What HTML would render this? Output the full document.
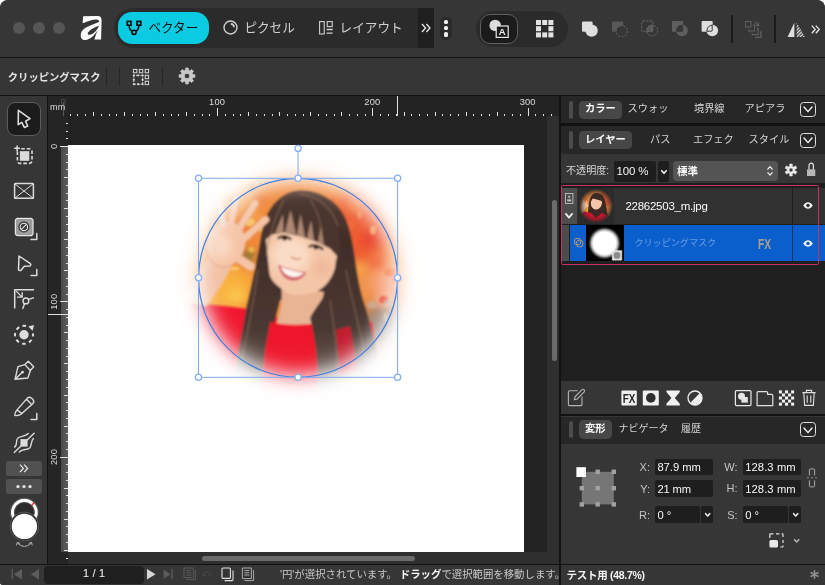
<!DOCTYPE html>
<html lang="ja">
<head>
<meta charset="utf-8">
<title>Affinity</title>
<style>
*{box-sizing:border-box;margin:0;padding:0}
html,body{width:825px;height:585px;overflow:hidden;background:#fff}
body{font-family:"Liberation Sans","Noto Sans CJK JP",sans-serif;font-size:11px;color:#e6e6e6;position:relative}
.abs,#win *{position:absolute}
#win{will-change:transform;position:absolute;left:0;top:0;width:825px;height:585px;background:#363636;border-radius:8px 8px 0 3px;overflow:hidden}
.t{white-space:nowrap;line-height:1}
svg{overflow:visible}
/* title bar */
#title{left:0;top:0;width:825px;height:57px;background:#363636}
#ctx{left:0;top:58px;width:825px;height:37px;background:#363636}
.hl{background:#121212;height:1px}
.vl{background:#121212;width:1px}
.tl{width:12px;height:12px;border-radius:50%;background:#565656;top:22px}
#pill{left:114px;top:8px;width:304px;height:40px;border-radius:20px 0 0 20px;background:#2b2b2b}
#vec{left:118px;top:12px;width:91px;height:32px;border-radius:14px;background:#0bcbe2}
/* tools */
#tools{left:0;top:96px;width:47px;height:468px;background:#363636}
#canvas{left:48px;top:96px;width:511px;height:468px;background:#232323;overflow:hidden}
#status{left:0;top:565px;width:825px;height:20px;background:#363636}
#right{left:561px;top:96px;width:264px;height:468px;background:#363636}
.tb{font-size:10.3px;font-weight:700;color:#fafafa}
.tn{font-size:10.2px;color:#d4d4d4}
.fv{font-size:11.2px;color:#f6f6f6}
.fl{font-size:11px;color:#c4c4c4}
</style>
</head>
<body>
<div id="win">
<!-- TITLE BAR -->
<div id="title">
  <div class="tl" style="left:13px"></div><div class="tl" style="left:33px"></div><div class="tl" style="left:53px"></div>
  <svg id="logo" style="left:80px;top:16px" width="22" height="24" viewBox="0 0 22 24"><path fill="#fff" d="M3.1 0.2 L17.5 0 C20.5 0 21.6 1.5 21.6 4.4 L21.1 23.5 L14.3 23.5 L17.4 14.6 C14.5 19.5 9.5 24 5.5 24 C1.6 24 0.2 21.5 0.9 17.4 C1.8 14 5 11.5 9.4 9.9 C13 8.4 16.5 6.8 19.1 5.7 C19.6 4.6 18.6 3.6 16.2 3.4 C13 3.4 9.4 4.5 2.6 7.3 Z"/><path fill="#363636" d="M19.1 9.9 C15.5 10.4 10.5 13.2 8.2 16.2 C7 18 8 19.4 10.9 18.6 C14 17.6 17 14 19.1 9.9 Z"/></svg>
  <div id="pill"></div>
  <div id="more1" style="left:418px;top:8px;width:16px;height:40px;background:#1f1f1f"></div>
  <div id="vec"></div>
  <svg style="left:126px;top:20px" width="16" height="16" viewBox="0 0 16 16" fill="none" stroke="#0a0a0a" stroke-width="1.6"><rect x="1.2" y="1.4" width="3.8" height="3.8"/><rect x="11" y="1.4" width="3.8" height="3.8"/><circle cx="8" cy="12.3" r="2.1"/><path d="M3.1 5.2 C3.3 8.5 4.6 10.6 6.3 11.3 M12.9 5.2 C12.7 8.5 11.4 10.6 9.7 11.3"/></svg>
  <div class="t" style="left:148.4px;top:21.6px;font-size:12.6px;color:#111">ベクター</div>
  <svg style="left:222.5px;top:20.3px" width="15" height="15" viewBox="0 0 15 15" fill="none" stroke="#d2d2d2" stroke-width="1.4"><circle cx="7.5" cy="7.5" r="6.5"/><path d="M7.8 3.9 A3.6 3.6 0 0 1 11.1 7.2" stroke-width="1.6"/></svg>
  <div class="t" style="left:244.4px;top:21.6px;font-size:12.6px;color:#d2d2d2">ピクセル</div>
  <svg style="left:319px;top:21px" width="14" height="14" viewBox="0 0 14 14" fill="none" stroke="#d2d2d2" stroke-width="1.1"><rect x="0.6" y="0.6" width="4.6" height="12.4"/><rect x="8.2" y="0.6" width="5" height="5"/><path d="M7.6 8.5H13.7M7.6 12.1H13.7" stroke-width="1.3"/></svg>
  <div class="t" style="left:339.6px;top:21.6px;font-size:12.6px;color:#d2d2d2">レイアウト</div>
  <svg style="left:421px;top:23px" width="10" height="10" viewBox="0 0 10 10" fill="none" stroke="#e8e8e8" stroke-width="1.3"><path d="M1 1L4.6 5L1 9M5.4 1L9 5L5.4 9"/></svg>
  <div style="left:440px;top:17px;width:12px;height:23px;border-radius:5px;background:#2a2a2a"></div>
  <div style="left:443.8px;top:19.7px;width:4.6px;height:4.6px;border-radius:1.6px;background:#eee"></div>
  <div style="left:443.8px;top:25.9px;width:4.6px;height:4.6px;border-radius:1.6px;background:#eee"></div>
  <div style="left:443.8px;top:32px;width:4.6px;height:4.6px;border-radius:1.6px;background:#eee"></div>
  <div id="grp2" style="left:476px;top:10.5px;width:92px;height:36.5px;border-radius:18px;background:#2b2b2b"></div>
  <div id="selbtn" style="left:480px;top:14px;width:38px;height:29.5px;border-radius:10px;background:#1b1b1b;border:1px solid #5e5e5e"></div>
  <svg style="left:488px;top:18px" width="22" height="21" viewBox="0 0 22 21"><circle cx="7.2" cy="7.4" r="5.7" fill="#dcdcdc"/><rect x="8.2" y="8" width="12" height="11.4" fill="#1b1b1b" stroke="#e6e6e6" stroke-width="1.2"/><text x="14.2" y="17.4" font-family="Liberation Sans,sans-serif" font-weight="700" font-size="9.5" fill="#f0f0f0" text-anchor="middle" style="position:static">A</text></svg>
  <svg style="left:536px;top:20px" width="18" height="18" viewBox="0 0 18 18" fill="#e2e2e2"><rect x="0" y="0" width="5" height="5"/><rect x="6.2" y="0" width="5" height="5"/><rect x="12.4" y="0" width="5" height="5"/><rect x="0" y="6.2" width="5" height="5"/><rect x="12.4" y="6.2" width="5" height="5"/><rect x="0" y="12.4" width="5" height="5"/><rect x="6.2" y="12.4" width="5" height="5"/><rect x="12.4" y="12.4" width="5" height="5"/></svg>
  <svg style="left:580px;top:19px" width="20" height="20" viewBox="0 0 20 20"><rect x="2" y="2.5" width="10.6" height="10.3" rx="1.2" fill="#dedede"/><circle cx="11.6" cy="11.6" r="6.2" fill="#dedede"/></svg>
  <svg style="left:610px;top:19px" width="20" height="20" viewBox="0 0 20 20"><rect x="2" y="2.5" width="11.2" height="10.3" rx="1" fill="#585858"/><circle cx="11.7" cy="12.2" r="5.6" fill="#363636" stroke="#6c6c6c" stroke-width="1" stroke-dasharray="2 1.4"/></svg>
  <svg style="left:640px;top:19px" width="20" height="20" viewBox="0 0 20 20"><path d="M6.63 12.7 A5.5 5.5 0 0 1 13 6.09 V12.7 Z" fill="#5a5a5a"/><rect x="1.8" y="2" width="11.2" height="10.7" rx="1" fill="none" stroke="#6c6c6c" stroke-width="1" stroke-dasharray="2 1.4"/><circle cx="12" cy="11.5" r="5.5" fill="none" stroke="#6c6c6c" stroke-width="1" stroke-dasharray="2 1.4"/></svg>
  <svg style="left:670px;top:19px" width="20" height="20" viewBox="0 0 20 20"><path fill-rule="evenodd" fill="#5e5e5e" d="M3 2 H12.2 A1 1 0 0 1 13.2 3 V11.7 A1 1 0 0 1 12.2 12.7 H3 A1 1 0 0 1 2 11.7 V3 A1 1 0 0 1 3 2 Z M12 5.7 A5.8 5.8 0 1 1 11.99 5.7 Z"/></svg>
  <svg style="left:700px;top:19px" width="20" height="20" viewBox="0 0 20 20"><defs><clipPath id="cq"><rect x="1.6" y="2" width="11.1" height="10.7" rx="1"/></clipPath><clipPath id="cc"><circle cx="12.3" cy="11.5" r="5.8"/></clipPath></defs><rect x="1.6" y="2" width="11.1" height="10.7" rx="1" fill="#dedede"/><circle cx="12.3" cy="11.5" r="5.8" fill="#dedede"/><circle cx="12.3" cy="11.5" r="5.3" fill="none" stroke="#363636" stroke-width="1" clip-path="url(#cq)"/><rect x="2.1" y="2.5" width="10.1" height="9.7" rx="0.6" fill="none" stroke="#363636" stroke-width="1" clip-path="url(#cc)"/></svg>
  <div style="left:731px;top:15px;width:1.5px;height:28px;background:#1a1a1a"></div>
  <svg style="left:745px;top:21px" width="17" height="17" viewBox="0 0 17 17" fill="none" stroke="#606060" stroke-width="1.1"><rect x="0.6" y="0.6" width="5.4" height="5.4"/><path d="M3.6 8.4 V10 H9.6 V4 H8"/><path d="M7.2 12.2 V13.6 H13.2 V7.6 H11.8" /><path d="M10.8 15.8 V16.4 H16 V11 H15.4" stroke-width="1.4"/><path d="M10 1 L13.4 4.4 M13.6 1.6 V4.6 H10.6"/></svg>
  <div style="left:774px;top:15px;width:1.5px;height:28px;background:#1a1a1a"></div>
  <svg style="left:787px;top:22px" width="19" height="16" viewBox="0 0 19 16"><defs><pattern id="hatch" width="2.4" height="2.4" patternUnits="userSpaceOnUse" patternTransform="rotate(-45)"><rect width="2.4" height="1.3" fill="#dcdcdc"/></pattern></defs><path d="M7.4 0.6 V15 H0.6 Z" fill="#dedede"/><path d="M9.6 0.6 V15 H18 Z" fill="url(#hatch)"/></svg>
  <svg style="left:811px;top:25px" width="9" height="9" viewBox="0 0 9 9" fill="none" stroke="#eaeaea" stroke-width="1.3"><path d="M0.8 0.6L4.2 4.4L0.8 8.2M4.8 0.6L8.2 4.4L4.8 8.2"/></svg>
</div>
<div class="hl" style="left:0;top:57px;width:825px"></div>
<!-- CONTEXT TOOLBAR -->
<div id="ctx">
  <div class="t" style="left:7.8px;top:14.8px;font-size:10.3px;font-weight:700;color:#e4e4e4">クリッピングマスク</div>
  <div class="vl" style="left:106px;top:9px;height:19px;background:#262626"></div>
  <div class="vl" style="left:119px;top:9px;height:19px;background:#262626"></div>
  <div class="vl" style="left:162px;top:9px;height:19px;background:#262626"></div>
  <svg style="left:132px;top:10px" width="18" height="18" viewBox="0 0 18 18" fill="none" stroke="#d8d8d8" stroke-width="1"><rect x="1.4" y="1.4" width="3.4" height="3.4"/><rect x="7.3" y="1.4" width="3.4" height="3.4"/><rect x="13.2" y="1.4" width="3.4" height="3.4"/><rect x="13.2" y="7.3" width="3.4" height="3.4"/><rect x="13.2" y="13.2" width="3.4" height="3.4"/><rect x="1.8" y="7.4" width="8.8" height="8.8" stroke-dasharray="1.2 1"/><g fill="#e4e4e4" stroke="none"><rect x="0.9" y="6.5" width="1.8" height="1.8"/><rect x="5.3" y="6.5" width="1.8" height="1.8"/><rect x="9.7" y="6.5" width="1.8" height="1.8"/><rect x="0.9" y="10.9" width="1.8" height="1.8"/><rect x="9.7" y="10.9" width="1.8" height="1.8"/><rect x="0.9" y="15.3" width="1.8" height="1.8"/><rect x="5.3" y="15.3" width="1.8" height="1.8"/><rect x="9.7" y="15.3" width="1.8" height="1.8"/></g></svg>
  <svg style="left:178px;top:9px" width="18" height="18" viewBox="0 0 18 18"><path fill-rule="evenodd" fill="#c8c8c8" stroke="#c8c8c8" stroke-width="0.8" stroke-linejoin="round" d="M7.58 3.27 L7.69 1.11 L10.31 1.11 L10.42 3.27 L12.04 3.95 L13.65 2.49 L15.51 4.35 L14.05 5.96 L14.73 7.58 L16.89 7.69 L16.89 10.31 L14.73 10.42 L14.05 12.04 L15.51 13.65 L13.65 15.51 L12.04 14.05 L10.42 14.73 L10.31 16.89 L7.69 16.89 L7.58 14.73 L5.96 14.05 L4.35 15.51 L2.49 13.65 L3.95 12.04 L3.27 10.42 L1.11 10.31 L1.11 7.69 L3.27 7.58 L3.95 5.96 L2.49 4.35 L4.35 2.49 L5.96 3.95 Z M11.70 9.00 A2.70 2.70 0 1 0 6.30 9.00 A2.70 2.70 0 1 0 11.70 9.00 Z"/></svg>
</div>
<div class="hl" style="left:0;top:95px;width:825px"></div>
<!-- TOOLS -->
<div id="tools">
  <div style="left:7px;top:6px;width:34px;height:34px;border-radius:8px;background:#1c1c1c;border:1px solid #5c5c5c"></div>
  <svg style="left:0;top:0" width="47" height="468" viewBox="0 0 47 468" fill="none" stroke="#dcdcdc" stroke-width="1.5" stroke-linejoin="round" stroke-linecap="round">
    <!-- move -->
    <path d="M18.4 14.3 L18.2 28.7 L21.8 26.4 L24.3 31.4 L27.7 30 L25.6 25.2 L30 22.6 Z" stroke-width="1.6"/>
    <!-- artboard -->
    <rect x="17.4" y="52.8" width="14.6" height="14.6" rx="2.6" stroke-width="1.6" stroke-dasharray="3.6 2" stroke-dashoffset="-1.2" stroke-linecap="butt"/>
    <rect x="16" y="50" width="5" height="5" fill="#363636" stroke="none"/>
    <path d="M14.2 52.3 H20 M17.1 49.4 V55.2" stroke-width="1.5" stroke-linecap="butt"/>
    <rect x="19.9" y="55.2" width="9.4" height="9.6" fill="#dcdcdc" stroke="none"/>
    <!-- frame -->
    <rect x="14.6" y="87.5" width="18.8" height="14.8" rx="0.8" stroke-width="1.5"/>
    <path d="M15 88 L33 102 M33 88 L15 102" stroke-width="1"/>
    <!-- fill -->
    <rect x="15.4" y="122.4" width="17.6" height="17.2" rx="2.4" fill="#9c9c9c" stroke="#e8e8e8" stroke-width="1.3" stroke-dasharray="1 0.9"/>
    <circle cx="23.9" cy="130.9" r="5.6" fill="#3a3a3a" stroke="none"/>
    <circle cx="23.9" cy="130.9" r="3.7" stroke="#e6e6e6" stroke-width="1.1"/>
    <path d="M21.4 133.4 L26.4 128.4" stroke="#e6e6e6" stroke-width="1.1"/>
    <path d="M36.8 137.6 V143.5 H31" fill="none" stroke="#d8d8d8" stroke-width="1.5"/>
    <!-- node -->
    <path d="M19 160 L18.5 173.6 Q18.6 174.6 20.8 174.5 L24.3 170.2 L30 170 Q31.4 169 30.4 167.6 Z" stroke-width="1.5"/>
    <path d="M36.8 173.6 V179.5 H31" fill="none" stroke="#d8d8d8" stroke-width="1.5"/>
    <!-- corner -->
    <path d="M34.1 193.7 H14.7 V212.6" stroke-linecap="butt"/>
    <path d="M16.4 195.4 L21.6 200.6 M22.2 196.6 V201.2 H17.6" stroke-width="1.3"/>
    <circle cx="25.9" cy="204.9" r="2.9" stroke-width="1.4"/>
    <path d="M28.6 203.4 L33.4 201.8 M24.6 207.6 L22.8 212.6" stroke-width="1.4"/>
    <!-- contour -->
    <circle cx="24" cy="238.8" r="9" stroke-width="2" stroke-dasharray="3.6 3.47" stroke-dashoffset="1.8" stroke-linecap="butt"/>
    <circle cx="24" cy="238.8" r="4.7" fill="#dcdcdc" stroke="none"/>
    <circle cx="31.6" cy="231.4" r="4.3" fill="#363636" stroke="none"/>
    <path d="M28.3 230.6 L34.1 228.9 L32.6 234.7 Z" fill="#dcdcdc" stroke="none"/>
    <!-- pen -->
    <path d="M15 283.3 L18 270.7 L24.9 268.6 L30.3 274.5 L27.9 282 Z M24.9 268.6 L28.3 265.2 L33.7 270.7 L30.3 274.5 M15.4 283 L22 276.6" stroke-width="1.4"/>
    <circle cx="22.5" cy="276.2" r="1.4" fill="#dcdcdc" stroke="none"/>
    <!-- pencil -->
    <path d="M14.8 319.4 Q14.4 316.6 17 313.9 L27.6 301.9 Q29.6 300.4 31.6 302.2 L33 303.6 Q34.6 305.6 33 307.4 L21.8 317.6 Q18.4 320.2 14.8 319.4 Z M17.3 314 L21.8 317.6 M26.6 303.2 L31.6 308.4" stroke-width="1.4"/>
    <path d="M36.8 317.6 V323.5 H31" fill="none" stroke="#d8d8d8" stroke-width="1.5"/>
    <!-- smooth -->
    <rect x="20.4" y="343.1" width="7.2" height="7.5" fill="#dcdcdc" stroke="none"/>
    <path d="M14.3 356.4 L34.1 337.3" stroke-width="1.4"/>
    <path d="M14.6 351 C17.6 349.6 15.6 345 17.4 342.6 C19.6 339.4 24.6 341.4 28.3 337.6" stroke-width="1.4"/>
    <path d="M19.4 356 C22.4 352.4 27.6 354.6 30 351.6 C32 349 30.4 345.4 33.4 342.4" stroke-width="1.4"/>
  </svg>
  <div style="left:6px;top:365px;width:36px;height:15px;border-radius:2.5px;background:#515151"></div>
  <svg style="left:19px;top:368px" width="10" height="9" viewBox="0 0 10 9" fill="none" stroke="#ececec" stroke-width="1.2"><path d="M1 0.6L4.4 4.4L1 8.2M5.2 0.6L8.6 4.4L5.2 8.2"/></svg>
  <div style="left:6px;top:383px;width:36px;height:15px;border-radius:2.5px;background:#515151"></div>
  <svg style="left:6px;top:383px" width="36" height="15" viewBox="0 0 36 15" fill="#e0e0e0"><circle cx="12" cy="7.6" r="1.7"/><circle cx="18" cy="7.6" r="1.7"/><circle cx="24" cy="7.6" r="1.7"/></svg>
  <svg style="left:8px;top:400px" width="33" height="56" viewBox="0 0 33 56">
    <circle cx="16.4" cy="16.3" r="14.3" fill="#2a2a2a" stroke="#5a5a5a" stroke-width="0.9"/>
    <circle cx="16.4" cy="16.3" r="11.8" fill="none" stroke="#fff" stroke-width="3.3"/>
    <path d="M23.4 9.7 L26.2 6.6" stroke="#f03040" stroke-width="1.5"/>
    <circle cx="16.4" cy="16.3" r="9.9" fill="#2b2b2b" stroke="#5a5a5a" stroke-width="0.9"/>
    <circle cx="16.4" cy="30.4" r="14.4" fill="#2c2c2c" stroke="#5a5a5a" stroke-width="0.9"/>
    <circle cx="16.4" cy="30.4" r="12.7" fill="#fff"/>
    <path d="M9.4 47 Q16.4 54 23.4 47 M8.6 49.4 L9.2 46.4 L12 47.4 M24.2 49.4 L23.6 46.4 L20.8 47.4" fill="none" stroke="#b4b4b4" stroke-width="1"/>
  </svg>
</div>
<div class="vl" style="left:47px;top:96px;height:468px"></div>
<!-- CANVAS -->
<div id="canvas">
  <div style="left:499px;top:20px;width:12px;height:448px;background:#2f2f2f"></div>
  <div style="left:0;top:455.5px;width:511px;height:12.5px;background:#2f2f2f"></div>
  <svg style="left:0;top:0" width="511" height="468" viewBox="48 96 511 468">
   <rect x="68" y="145" width="456" height="407" fill="#fff"/>
   <rect x="48" y="96" width="20" height="468" fill="#252525"/>
   <linearGradient id="vr" x1="0" x2="1" y1="0" y2="0"><stop offset="0" stop-color="#4a4a4a"/><stop offset="1" stop-color="#5c5c5c"/></linearGradient>
   <rect x="61" y="146" width="7" height="406" fill="url(#vr)"/>
   
<defs>
 <radialGradient id="feather" gradientUnits="userSpaceOnUse" cx="298.05" cy="277.8" r="128">
  <stop offset="0" stop-color="#fff"/><stop offset="0.4844" stop-color="#fff" stop-opacity="1.000"/><stop offset="0.5312" stop-color="#fff" stop-opacity="0.997"/><stop offset="0.5781" stop-color="#fff" stop-opacity="0.986"/><stop offset="0.6094" stop-color="#fff" stop-opacity="0.964"/><stop offset="0.6406" stop-color="#fff" stop-opacity="0.919"/><stop offset="0.6719" stop-color="#fff" stop-opacity="0.841"/><stop offset="0.6953" stop-color="#fff" stop-opacity="0.758"/><stop offset="0.7188" stop-color="#fff" stop-opacity="0.655"/><stop offset="0.7500" stop-color="#fff" stop-opacity="0.500"/><stop offset="0.7773" stop-color="#fff" stop-opacity="0.363"/><stop offset="0.8047" stop-color="#fff" stop-opacity="0.242"/><stop offset="0.8281" stop-color="#fff" stop-opacity="0.159"/><stop offset="0.8516" stop-color="#fff" stop-opacity="0.097"/><stop offset="0.8750" stop-color="#fff" stop-opacity="0.055"/><stop offset="0.8984" stop-color="#fff" stop-opacity="0.029"/><stop offset="0.9219" stop-color="#fff" stop-opacity="0.014"/><stop offset="0.9531" stop-color="#fff" stop-opacity="0.005"/><stop offset="1.0000" stop-color="#fff" stop-opacity="0.000"/>
 </radialGradient>
 <mask id="fm" maskUnits="userSpaceOnUse" x="170" y="150" width="260" height="260"><rect x="170" y="150" width="260" height="260" fill="url(#feather)"/></mask>
 <filter id="b2" x="-20%" y="-20%" width="140%" height="140%"><feGaussianBlur stdDeviation="1.2"/></filter>
 <filter id="b4" x="-30%" y="-30%" width="160%" height="160%"><feGaussianBlur stdDeviation="4"/></filter>
 <filter id="b8" x="-50%" y="-50%" width="200%" height="200%"><feGaussianBlur stdDeviation="8"/></filter>
</defs>
<g mask="url(#fm)">
 <rect x="170" y="150" width="260" height="260" fill="#f08a3a"/>
 <g filter="url(#b8)">
  <ellipse cx="225" cy="195" rx="36" ry="26" fill="#f6a860"/>
  <ellipse cx="200" cy="240" rx="20" ry="30" fill="#f8b47c"/>
  <ellipse cx="226" cy="288" rx="30" ry="22" fill="#f9b23c"/>
  <ellipse cx="300" cy="175" rx="40" ry="14" fill="#f49a5c"/>
  <ellipse cx="362" cy="225" rx="30" ry="40" fill="#ee5c30"/>
  <ellipse cx="388" cy="282" rx="18" ry="18" fill="#f8a684"/>
  <ellipse cx="384" cy="328" rx="24" ry="24" fill="#8e7a70"/>
  <ellipse cx="352" cy="285" rx="12" ry="16" fill="#f09a4a"/>
 </g>
 <g filter="url(#b4)">
  <ellipse cx="370" cy="238" rx="9" ry="9" fill="#e8402a"/>
  <ellipse cx="355" cy="205" rx="9" ry="7" fill="#f27a40"/>
  <ellipse cx="378" cy="262" rx="7" ry="6" fill="#f4663c"/>
  <ellipse cx="360" cy="268" rx="5" ry="6" fill="#fbb050"/>
  <ellipse cx="236" cy="296" rx="9" ry="7" fill="#fcc850"/>
  <ellipse cx="212" cy="276" rx="8" ry="6" fill="#f49838"/>
  <ellipse cx="248" cy="256" rx="7" ry="5" fill="#6c7034"/>
  <ellipse cx="262" cy="200" rx="8" ry="6" fill="#ee7a34"/>
  <ellipse cx="246" cy="230" rx="6" ry="7" fill="#f47c30"/>
  <ellipse cx="385" cy="300" rx="8" ry="5" fill="#fac0a4"/>
 </g>
 <g filter="url(#b2)"><ellipse cx="283.1" cy="307.8" rx="2.4" ry="4.1" fill="#ee6a30" opacity="0.59"/><ellipse cx="211.2" cy="228.3" rx="2.3" ry="3.1" fill="#f49030" opacity="0.58"/><ellipse cx="346.3" cy="309.0" rx="4.1" ry="4.5" fill="#fbb868" opacity="0.80"/><ellipse cx="275.9" cy="265.3" rx="3.5" ry="4.5" fill="#f6a048" opacity="0.57"/><ellipse cx="326.7" cy="242.7" rx="4.0" ry="3.5" fill="#f26a38" opacity="0.77"/><ellipse cx="286.0" cy="251.5" rx="4.3" ry="3.0" fill="#f6a048" opacity="0.77"/><ellipse cx="321.3" cy="287.7" rx="3.8" ry="3.4" fill="#f26a38" opacity="0.86"/><ellipse cx="199.1" cy="299.7" rx="3.2" ry="4.1" fill="#fbc450" opacity="0.83"/><ellipse cx="300.6" cy="348.5" rx="3.8" ry="2.9" fill="#f8a060" opacity="0.73"/><ellipse cx="277.5" cy="261.3" rx="3.6" ry="4.0" fill="#f6a048" opacity="0.61"/><ellipse cx="274.6" cy="279.6" rx="2.5" ry="3.5" fill="#ee6a30" opacity="0.87"/><ellipse cx="318.8" cy="232.6" rx="4.2" ry="3.5" fill="#e84028" opacity="0.73"/><ellipse cx="353.2" cy="190.9" rx="4.5" ry="2.2" fill="#f48848" opacity="0.84"/><ellipse cx="272.1" cy="343.9" rx="4.9" ry="2.7" fill="#ee6a30" opacity="0.70"/><ellipse cx="287.2" cy="258.8" rx="3.4" ry="3.6" fill="#f07828" opacity="0.75"/><ellipse cx="307.0" cy="322.4" rx="3.0" ry="3.0" fill="#f05838" opacity="0.90"/><ellipse cx="350.1" cy="306.9" rx="3.1" ry="2.4" fill="#f8a060" opacity="0.72"/><ellipse cx="219.9" cy="252.5" rx="4.5" ry="3.0" fill="#fbc450" opacity="0.64"/><ellipse cx="326.9" cy="294.6" rx="3.0" ry="3.3" fill="#f05838" opacity="0.79"/><ellipse cx="296.4" cy="298.3" rx="4.0" ry="3.6" fill="#f07828" opacity="0.68"/><ellipse cx="365.4" cy="345.8" rx="3.7" ry="4.3" fill="#9a8478" opacity="0.93"/><ellipse cx="268.8" cy="215.3" rx="3.5" ry="2.3" fill="#f07828" opacity="0.80"/><ellipse cx="322.0" cy="287.9" rx="3.7" ry="2.3" fill="#f26a38" opacity="0.79"/><ellipse cx="353.9" cy="319.9" rx="2.5" ry="2.9" fill="#f8a060" opacity="0.56"/><ellipse cx="350.1" cy="225.4" rx="4.3" ry="4.5" fill="#f26a38" opacity="0.79"/><ellipse cx="268.2" cy="282.9" rx="5.5" ry="3.2" fill="#f07828" opacity="0.74"/><ellipse cx="322.9" cy="292.9" rx="4.6" ry="3.2" fill="#e84028" opacity="0.83"/><ellipse cx="260.1" cy="274.1" rx="3.4" ry="3.8" fill="#f6a048" opacity="0.92"/><ellipse cx="300.4" cy="231.8" rx="5.0" ry="3.8" fill="#f05838" opacity="0.65"/><ellipse cx="274.8" cy="303.8" rx="2.9" ry="3.4" fill="#fad070" opacity="0.75"/><ellipse cx="249.6" cy="222.1" rx="5.5" ry="4.2" fill="#fad070" opacity="0.87"/><ellipse cx="333.4" cy="200.6" rx="2.9" ry="3.3" fill="#f26a38" opacity="0.84"/><ellipse cx="387.3" cy="272.2" rx="3.1" ry="3.8" fill="#f48848" opacity="0.93"/><ellipse cx="201.1" cy="311.4" rx="5.4" ry="2.9" fill="#fbc450" opacity="0.64"/><ellipse cx="303.4" cy="314.9" rx="3.8" ry="4.6" fill="#f26a38" opacity="0.79"/><ellipse cx="398.0" cy="279.2" rx="4.8" ry="2.2" fill="#e84028" opacity="0.81"/><ellipse cx="372.9" cy="230.3" rx="2.9" ry="4.3" fill="#fbb868" opacity="0.72"/><ellipse cx="279.8" cy="257.2" rx="3.5" ry="3.0" fill="#ee6a30" opacity="0.93"/><ellipse cx="292.5" cy="243.5" rx="2.3" ry="3.5" fill="#f49030" opacity="0.74"/><ellipse cx="256.8" cy="216.7" rx="5.4" ry="3.7" fill="#f6a048" opacity="0.69"/><ellipse cx="267.9" cy="268.5" rx="4.8" ry="3.9" fill="#f8b040" opacity="0.59"/><ellipse cx="297.9" cy="245.7" rx="2.8" ry="4.3" fill="#fad070" opacity="0.56"/><ellipse cx="312.9" cy="340.4" rx="4.1" ry="2.7" fill="#fbb868" opacity="0.72"/><ellipse cx="366.0" cy="351.4" rx="5.2" ry="3.7" fill="#7e6a60" opacity="0.88"/><ellipse cx="205.7" cy="268.2" rx="2.6" ry="2.4" fill="#f6a048" opacity="0.75"/><ellipse cx="359.6" cy="214.7" rx="2.2" ry="4.1" fill="#f8a060" opacity="0.62"/><ellipse cx="215.3" cy="291.9" rx="2.4" ry="3.8" fill="#f6a048" opacity="0.76"/><ellipse cx="210.2" cy="287.7" rx="2.4" ry="2.5" fill="#f6a048" opacity="0.57"/><ellipse cx="346.9" cy="312.5" rx="4.7" ry="4.4" fill="#ee5030" opacity="0.73"/><ellipse cx="249.0" cy="236.1" rx="2.9" ry="2.7" fill="#f6a048" opacity="0.75"/><ellipse cx="320.8" cy="217.5" rx="4.5" ry="4.3" fill="#f26a38" opacity="0.93"/><ellipse cx="293.8" cy="347.1" rx="5.0" ry="2.4" fill="#f49030" opacity="0.60"/><ellipse cx="273.3" cy="287.4" rx="3.6" ry="2.6" fill="#f49030" opacity="0.67"/><ellipse cx="361.5" cy="339.4" rx="4.3" ry="3.0" fill="#f05838" opacity="0.65"/><ellipse cx="337.8" cy="324.4" rx="5.3" ry="3.0" fill="#f05838" opacity="0.74"/><ellipse cx="391.1" cy="272.1" rx="4.5" ry="4.6" fill="#f26a38" opacity="0.71"/><ellipse cx="252.8" cy="302.4" rx="4.6" ry="2.1" fill="#f8b040" opacity="0.77"/><ellipse cx="277.9" cy="285.9" rx="3.9" ry="2.8" fill="#fbc450" opacity="0.93"/><ellipse cx="374.5" cy="343.7" rx="5.4" ry="2.3" fill="#b09a8c" opacity="0.66"/><ellipse cx="383.8" cy="299.8" rx="4.7" ry="4.1" fill="#e84028" opacity="0.89"/><ellipse cx="251.7" cy="185.7" rx="2.7" ry="4.4" fill="#f07828" opacity="0.78"/><ellipse cx="289.5" cy="251.5" rx="4.8" ry="2.5" fill="#f8b040" opacity="0.91"/><ellipse cx="295.5" cy="299.3" rx="4.8" ry="2.2" fill="#f8b040" opacity="0.89"/><ellipse cx="385.6" cy="317.0" rx="2.2" ry="4.6" fill="#c8b0a0" opacity="0.72"/><ellipse cx="362.4" cy="240.1" rx="3.9" ry="2.6" fill="#ee5030" opacity="0.59"/><ellipse cx="310.9" cy="298.7" rx="5.3" ry="3.6" fill="#f26a38" opacity="0.76"/><ellipse cx="314.2" cy="335.0" rx="2.8" ry="2.9" fill="#f05838" opacity="0.56"/><ellipse cx="297.9" cy="299.4" rx="3.9" ry="4.5" fill="#ee6a30" opacity="0.76"/><ellipse cx="299.6" cy="337.3" rx="4.9" ry="3.1" fill="#ee6a30" opacity="0.75"/><ellipse cx="325.7" cy="230.9" rx="3.2" ry="2.6" fill="#f8a060" opacity="0.64"/><ellipse cx="329.0" cy="370.6" rx="4.3" ry="3.1" fill="#f05838" opacity="0.69"/><ellipse cx="327.6" cy="288.5" rx="4.3" ry="4.3" fill="#ee5030" opacity="0.72"/><ellipse cx="371.8" cy="304.8" rx="5.1" ry="3.7" fill="#c8b0a0" opacity="0.66"/><ellipse cx="300.2" cy="323.7" rx="2.8" ry="2.7" fill="#f48848" opacity="0.55"/><ellipse cx="265.8" cy="314.9" rx="3.3" ry="2.1" fill="#f6a048" opacity="0.90"/><ellipse cx="305.2" cy="313.4" rx="3.5" ry="3.2" fill="#e84028" opacity="0.75"/><ellipse cx="317.5" cy="339.4" rx="2.5" ry="4.1" fill="#ee5030" opacity="0.61"/><ellipse cx="251.3" cy="249.6" rx="3.2" ry="2.6" fill="#fbc450" opacity="0.78"/><ellipse cx="213.4" cy="262.3" rx="5.1" ry="4.0" fill="#ee6a30" opacity="0.79"/><ellipse cx="305.5" cy="194.9" rx="2.7" ry="3.9" fill="#f48848" opacity="0.81"/><ellipse cx="388.0" cy="303.4" rx="4.6" ry="4.1" fill="#c8b0a0" opacity="0.61"/><ellipse cx="234.3" cy="268.4" rx="4.9" ry="2.0" fill="#fad070" opacity="0.82"/><ellipse cx="322.5" cy="199.1" rx="4.3" ry="2.2" fill="#f05838" opacity="0.57"/><ellipse cx="230.0" cy="198.7" rx="5.0" ry="3.5" fill="#f07828" opacity="0.80"/><ellipse cx="241.9" cy="221.1" rx="3.1" ry="3.2" fill="#f07828" opacity="0.58"/><ellipse cx="388.2" cy="237.3" rx="4.4" ry="2.2" fill="#ee5030" opacity="0.84"/><ellipse cx="297.6" cy="304.5" rx="3.0" ry="4.0" fill="#fbc450" opacity="0.64"/><ellipse cx="262.4" cy="229.1" rx="3.5" ry="3.2" fill="#fad070" opacity="0.82"/><ellipse cx="305.9" cy="204.1" rx="2.9" ry="3.6" fill="#f05838" opacity="0.68"/><ellipse cx="251.0" cy="212.0" rx="4.1" ry="2.0" fill="#f6a048" opacity="0.57"/></g>
 <defs>
  <linearGradient id="hg" gradientUnits="userSpaceOnUse" x1="300" y1="190" x2="300" y2="390"><stop offset="0" stop-color="#54392f"/><stop offset="0.25" stop-color="#412d28"/><stop offset="0.7" stop-color="#4b3832"/><stop offset="1" stop-color="#74645e"/></linearGradient>
 </defs>
 <g filter="url(#b2)">
  <!-- sleeve / shirt -->
  <path d="M176 305 C196 302 224 306 248 309 L262 320 L258 400 L176 400 Z" fill="#f0142e"/>
  <path d="M250 316 L372 322 L384 400 L240 400 Z" fill="#ee122c"/>
  <!-- hair back -->
  <path d="M301 190.5 C282 191 267 206 262 232 C258 258 252 284 246 310 C242 334 236 360 232 390 L262 392 C266 360 272 330 280 300 L322 296 C318 330 312 360 312 392 L384 392 C380 360 372 330 366 310 C360 292 358 280 356 268 C353 245 350 228 344 216 C338 203 322 190.5 301 190.5 Z" fill="url(#hg)"/>
  <!-- neck -->
  <path d="M281 284 L324 292 C321 304 320 314 322 326 L300 344 L276 324 C281 312 283 298 281 284 Z" fill="#e9b494"/>
  <path d="M268 321 C280 326 310 326 328 321 L334 400 L260 400 Z" fill="#ee122c"/>
  <!-- face -->
  <path d="M266 228 C262 244 263 258 268.7 272.3 C271 280 275 284 279 286.7 C285 292 291 295 297.4 294.9 C306 295 313 293 318 290.8 C324 287 328 283 330.3 278.5 C334 272 336 267 336 262 C338 256 336 250 334.4 247.7 L320 206 L282 204 Z" fill="#f4c6a8"/>
  <ellipse cx="291" cy="256" rx="19" ry="18" fill="#fadcc6" filter="url(#b4)"/>
  <ellipse cx="322" cy="268" rx="9" ry="10" fill="#efb698" filter="url(#b4)" opacity="0.8"/>
  <!-- bangs -->
  <path d="M263 242 C263 222 272 206 284 200 C296 195 314 196 326 203 C336 210 341 232 340 258 L336 255 L330 248.6 L316 241.4 L301 236.4 L284 232.4 L272 234.6 Z" fill="#4a342d"/>
  <g fill="#eebc9e" opacity="0.62"><path d="M285 232.6 L290.6 210 L296 234.4 Z"/><path d="M297 235 L300.6 214 L305 237.6 Z"/><path d="M275 233.6 L283 214 L283.4 232.4 Z"/><path d="M307 238.4 L311 220 L314 240.4 Z"/><path d="M318 242.4 L321 226 L324 245 Z"/></g>
  <!-- front lock left -->
  <path d="M264 238 C260 262 256 286 252 306 C247 332 240 362 236 392 L258 392 C262 364 268 336 272 312 C272 290 268 262 266 240 Z" fill="url(#hg)"/>
  <!-- right hair mass over shoulder -->
  <path d="M336 258 C342 284 352 310 360 336 C366 356 372 376 374 392 L318 392 C318 366 316 340 310 318 C316 306 326 296 330 284 C334 276 336 266 336 258 Z" fill="url(#hg)"/>
  <path d="M336 330 L350 326 L358 372 L340 376 Z" fill="#e8142e" opacity="0.75"/>
  <!-- strands -->
  <g fill="none" stroke="#967460" stroke-width="1.2" opacity="0.6"><path d="M284 200 C276 214 270 232 266 256"/><path d="M300 194 C316 196 332 206 338 226"/><path d="M258 270 C254 300 248 330 242 360"/><path d="M346 270 C352 300 360 330 366 360"/><path d="M330 300 C334 330 338 352 338 380"/><path d="M310 200 C318 210 322 226 322 244"/></g>
  <!-- eyes -->
  <path d="M278.6 238 Q284 234 290.4 239" stroke="#2e1a14" stroke-width="2.4" fill="none" stroke-linecap="round"/>
  <path d="M309.6 246.4 Q316 243.4 322.4 249" stroke="#2e1a14" stroke-width="2.4" fill="none" stroke-linecap="round"/>
  <ellipse cx="284.6" cy="238.6" rx="2.6" ry="2" fill="#2e1a14"/><ellipse cx="316" cy="247.4" rx="2.6" ry="2" fill="#2e1a14"/>
  <!-- nose -->
  <path d="M291 257 Q296 260.4 301 258.6" stroke="#d49474" stroke-width="1.6" fill="none"/>
  <!-- mouth -->
  <path d="M278 264.6 C286 268.4 297 271.4 306.4 272.4 C302 280 294 282 288 279.6 C283 277.6 279.4 271.6 278 264.6 Z" fill="#d2606a"/>
  <path d="M280.6 266.8 C288 269.6 297 272 304 273 C300 277 294 277.8 289 276 C285 274.6 282.4 271.4 280.6 266.8 Z" fill="#fcf6f0"/>
  <!-- hand -->
  <path d="M184 298 C190 284 199 270 210 256 L234 260 C228 278 216 294 206 306 Z" fill="#f2bea2"/>
  <g fill="none" stroke="#e39a80" stroke-linecap="round"><path d="M223.2 224 L219.2 202" stroke-width="6.4" stroke="#eeb8a2"/><path d="M230.4 224 L236 199" stroke-width="7.4"/><path d="M239 228 L255 203.6" stroke-width="7.8"/><path d="M244 238.6 L265.4 219.6" stroke-width="7.8"/><path d="M233 254.6 L250.4 266.4" stroke-width="9.2"/></g>
  <ellipse cx="226" cy="244" rx="19.4" ry="23.6" transform="rotate(16 226 244)" fill="#e39a80"/>
  <ellipse cx="226" cy="244" rx="18.6" ry="22.8" transform="rotate(16 226 244)" fill="#f5c4a6"/>
  <g fill="none" stroke="#f5c4a6" stroke-linecap="round"><path d="M223.2 224 L219.2 202" stroke-width="5.2" stroke="#f6d0bc"/><path d="M230.4 226 L236 199" stroke-width="6.2"/><path d="M239 229 L255 203.6" stroke-width="6.6"/><path d="M243 239.6 L265.4 219.6" stroke-width="6.6"/><path d="M232 254 L250.4 266.4" stroke-width="8"/></g>
  <ellipse cx="223" cy="246" rx="9" ry="12" fill="#fbdcc8" opacity="0.8" filter="url(#b4)"/>
 </g>
</g>
<g fill="none">
 <circle cx="298.05" cy="277.8" r="99.5" stroke="#3f7fe2" stroke-width="1.2"/>
 <rect x="198.5" y="178.3" width="199.1" height="199" stroke="#7fabee" stroke-width="1"/>
 <path d="M298.05 178.3 V148.4" stroke="#7fabee" stroke-width="1"/>
</g>
<g fill="#fff" stroke="#86b0ee" stroke-width="1.3">
 <circle cx="298.05" cy="148.4" r="3.1"/>
 <circle cx="198.5" cy="178.3" r="3.1"/><circle cx="298.05" cy="178.3" r="3.1"/><circle cx="397.6" cy="178.3" r="3.1"/>
 <circle cx="198.5" cy="277.8" r="3.1"/><circle cx="397.6" cy="277.8" r="3.1"/>
 <circle cx="198.5" cy="377.3" r="3.1"/><circle cx="298.05" cy="377.3" r="3.1"/><circle cx="397.6" cy="377.3" r="3.1"/>
</g>

   <g fill="#e2e2e2"><rect x="70" y="114" width="1" height="2"/><rect x="77" y="114" width="1" height="2"/><rect x="85" y="114" width="1" height="2"/><rect x="93" y="112" width="1" height="4"/><rect x="101" y="114" width="1" height="2"/><rect x="109" y="114" width="1" height="2"/><rect x="116" y="114" width="1" height="2"/><rect x="124" y="112" width="1" height="4"/><rect x="132" y="114" width="1" height="2"/><rect x="140" y="114" width="1" height="2"/><rect x="147" y="114" width="1" height="2"/><rect x="155" y="112" width="1" height="4"/><rect x="163" y="114" width="1" height="2"/><rect x="171" y="114" width="1" height="2"/><rect x="178" y="114" width="1" height="2"/><rect x="186" y="112" width="1" height="4"/><rect x="194" y="114" width="1" height="2"/><rect x="202" y="114" width="1" height="2"/><rect x="209" y="114" width="1" height="2"/><rect x="217" y="108" width="1" height="8"/><rect x="225" y="114" width="1" height="2"/><rect x="233" y="114" width="1" height="2"/><rect x="240" y="114" width="1" height="2"/><rect x="248" y="112" width="1" height="4"/><rect x="256" y="114" width="1" height="2"/><rect x="264" y="114" width="1" height="2"/><rect x="272" y="114" width="1" height="2"/><rect x="279" y="112" width="1" height="4"/><rect x="287" y="114" width="1" height="2"/><rect x="295" y="114" width="1" height="2"/><rect x="303" y="114" width="1" height="2"/><rect x="310" y="112" width="1" height="4"/><rect x="318" y="114" width="1" height="2"/><rect x="326" y="114" width="1" height="2"/><rect x="334" y="114" width="1" height="2"/><rect x="341" y="112" width="1" height="4"/><rect x="349" y="114" width="1" height="2"/><rect x="357" y="114" width="1" height="2"/><rect x="365" y="114" width="1" height="2"/><rect x="372" y="108" width="1" height="8"/><rect x="380" y="114" width="1" height="2"/><rect x="388" y="114" width="1" height="2"/><rect x="396" y="114" width="1" height="2"/><rect x="404" y="112" width="1" height="4"/><rect x="411" y="114" width="1" height="2"/><rect x="419" y="114" width="1" height="2"/><rect x="427" y="114" width="1" height="2"/><rect x="435" y="112" width="1" height="4"/><rect x="442" y="114" width="1" height="2"/><rect x="450" y="114" width="1" height="2"/><rect x="458" y="114" width="1" height="2"/><rect x="466" y="112" width="1" height="4"/><rect x="473" y="114" width="1" height="2"/><rect x="481" y="114" width="1" height="2"/><rect x="489" y="114" width="1" height="2"/><rect x="497" y="112" width="1" height="4"/><rect x="504" y="114" width="1" height="2"/><rect x="512" y="114" width="1" height="2"/><rect x="520" y="114" width="1" height="2"/><rect x="528" y="108" width="1" height="8"/><rect x="535" y="114" width="1" height="2"/><rect x="543" y="114" width="1" height="2"/><rect x="551" y="114" width="1" height="2"/><rect x="66" y="123" width="2" height="1"/><rect x="66" y="131" width="2" height="1"/><rect x="66" y="138" width="2" height="1"/><rect x="60" y="146" width="8" height="1"/><rect x="66" y="154" width="2" height="1"/><rect x="66" y="162" width="2" height="1"/><rect x="66" y="169" width="2" height="1"/><rect x="64" y="177" width="4" height="1"/><rect x="66" y="185" width="2" height="1"/><rect x="66" y="193" width="2" height="1"/><rect x="66" y="200" width="2" height="1"/><rect x="64" y="208" width="4" height="1"/><rect x="66" y="216" width="2" height="1"/><rect x="66" y="224" width="2" height="1"/><rect x="66" y="231" width="2" height="1"/><rect x="64" y="239" width="4" height="1"/><rect x="66" y="247" width="2" height="1"/><rect x="66" y="255" width="2" height="1"/><rect x="66" y="263" width="2" height="1"/><rect x="64" y="270" width="4" height="1"/><rect x="66" y="278" width="2" height="1"/><rect x="66" y="286" width="2" height="1"/><rect x="66" y="294" width="2" height="1"/><rect x="60" y="301" width="8" height="1"/><rect x="66" y="309" width="2" height="1"/><rect x="66" y="317" width="2" height="1"/><rect x="66" y="325" width="2" height="1"/><rect x="64" y="332" width="4" height="1"/><rect x="66" y="340" width="2" height="1"/><rect x="66" y="348" width="2" height="1"/><rect x="66" y="356" width="2" height="1"/><rect x="64" y="363" width="4" height="1"/><rect x="66" y="371" width="2" height="1"/><rect x="66" y="379" width="2" height="1"/><rect x="66" y="387" width="2" height="1"/><rect x="64" y="395" width="4" height="1"/><rect x="66" y="402" width="2" height="1"/><rect x="66" y="410" width="2" height="1"/><rect x="66" y="418" width="2" height="1"/><rect x="64" y="426" width="4" height="1"/><rect x="66" y="433" width="2" height="1"/><rect x="66" y="441" width="2" height="1"/><rect x="66" y="449" width="2" height="1"/><rect x="60" y="457" width="8" height="1"/><rect x="66" y="464" width="2" height="1"/><rect x="66" y="472" width="2" height="1"/><rect x="66" y="480" width="2" height="1"/><rect x="64" y="488" width="4" height="1"/><rect x="66" y="495" width="2" height="1"/><rect x="66" y="503" width="2" height="1"/><rect x="66" y="511" width="2" height="1"/><rect x="64" y="519" width="4" height="1"/><rect x="66" y="526" width="2" height="1"/><rect x="66" y="534" width="2" height="1"/><rect x="66" y="542" width="2" height="1"/><rect x="64" y="550" width="4" height="1"/><rect x="66" y="558" width="2" height="1"/><rect x="397" y="96" width="1" height="20"/><rect x="48" y="314" width="20" height="1"/></g>
   <g fill="#5a5a5a"><rect x="63" y="102" width="1" height="14"/></g>
   <g font-family="Liberation Sans,sans-serif" font-size="9.3" fill="#dcdcdc" letter-spacing="0.2"><text x="217.1" y="104.8" text-anchor="middle">100</text><text x="372.4" y="104.8" text-anchor="middle">200</text><text x="527.7" y="104.8" text-anchor="middle">300</text><text transform="translate(57.2 146.4) rotate(-90)" text-anchor="middle">0</text><text transform="translate(57.2 301.7) rotate(-90)" text-anchor="middle">100</text><text transform="translate(57.2 457.0) rotate(-90)" text-anchor="middle">200</text><text x="63.4" y="104.8" text-anchor="middle" fill="#555">0</text><text x="50" y="110" font-size="9">mm</text></g>
  </svg>
  <div style="left:503.5px;top:104px;width:5.5px;height:161px;border-radius:3px;background:#6b6b6b"></div>
  <div style="left:153.5px;top:459.8px;width:213px;height:5.6px;border-radius:3px;background:#6b6b6b"></div>
</div>
<div class="vl" style="left:559px;top:96px;height:468px;width:2px"></div>
<!-- RIGHT PANEL -->
<div id="right"></div>
<div id="rp" style="left:0;top:0;width:825px;height:585px">
 <!-- tab row 1 -->
 <div style="left:561px;top:96px;width:264px;height:27px;background:#272727"></div>
 <div style="left:561px;top:123px;width:264px;height:2.5px;background:#121212"></div>
 <div style="left:561px;top:125.5px;width:264px;height:28.5px;background:#272727"></div>
 <div style="left:568.8px;top:100.5px;width:4px;height:18px;border-radius:2px;background:#4c4c4c"></div>
 <div style="left:578.6px;top:100.5px;width:43.4px;height:18.4px;border-radius:4.5px;background:#474747"></div>
 <div class="t tb" style="left:585px;top:104.4px">カラー</div>
 <div class="t tn" style="left:627.6px;top:104.4px">スウォッ</div>
 <div class="t tn" style="left:694px;top:104.4px">境界線</div>
 <div class="t tn" style="left:744.6px;top:104.4px">アピアラ</div>
 <div style="left:800.4px;top:102.0px;width:15.5px;height:15.0px;border:1px solid #e0e0e0;border-radius:3.5px"></div><svg style="left:803.2px;top:106.4px" width="10" height="7" viewBox="0 0 10 7" fill="none" stroke="#f0f0f0" stroke-width="1.4" stroke-linecap="round" stroke-linejoin="round"><path d="M1 1L5 5.6L9 1"/></svg>
 <div style="left:568.8px;top:131px;width:4px;height:18px;border-radius:2px;background:#4c4c4c"></div>
 <div style="left:578.6px;top:131px;width:53.4px;height:18.4px;border-radius:4.5px;background:#474747"></div>
 <div class="t tb" style="left:585px;top:134.9px">レイヤー</div>
 <div class="t tn" style="left:650px;top:134.9px">パス</div>
 <div class="t tn" style="left:693px;top:134.9px">エフェク</div>
 <div class="t tn" style="left:748.6px;top:134.9px">スタイル</div>
 <div style="left:800.4px;top:132.6px;width:15.5px;height:15.0px;border:1px solid #e0e0e0;border-radius:3.5px"></div><svg style="left:803.2px;top:137.0px" width="10" height="7" viewBox="0 0 10 7" fill="none" stroke="#f0f0f0" stroke-width="1.4" stroke-linecap="round" stroke-linejoin="round"><path d="M1 1L5 5.6L9 1"/></svg>
 <!-- opacity row -->
 <div class="t" style="left:566px;top:165.8px;font-size:10.1px;color:#d6d6d6">不透明度:</div>
 <div style="left:614px;top:161.4px;width:42px;height:20.2px;background:#1d1d1d;border-radius:2px"></div>
 <div class="t" style="left:616.6px;top:166.4px;font-size:11.5px;color:#f4f4f4;letter-spacing:-0.2px">100 %</div>
 <div style="left:658.4px;top:161.4px;width:10.6px;height:20.2px;background:#1d1d1d;border-radius:2px"></div>
 <svg style="left:660.8px;top:169.6px" width="6" height="4.4" viewBox="0 0 7 5" fill="none" stroke="#f0f0f0" stroke-width="1.9" stroke-linecap="round" stroke-linejoin="round"><path d="M0.8 0.8L3.5 3.8L6.2 0.8"/></svg>
 <div style="left:672.8px;top:160.8px;width:104.8px;height:20.4px;background:#545454;border-radius:4px"></div>
 <div class="t" style="left:677px;top:165.6px;font-size:10.5px;font-weight:700;color:#f4f4f4">標準</div>
 <svg style="left:766.6px;top:164.6px" width="6" height="12" viewBox="0 0 6 12" fill="none" stroke="#f0f0f0" stroke-width="1.2" stroke-linecap="round" stroke-linejoin="round"><path d="M0.8 4.2L3 1.6L5.2 4.2M0.8 7.6L3 10.2L5.2 7.6"/></svg>
 <svg style="left:784px;top:163px" width="14" height="14" viewBox="0 0 14 14"><path fill-rule="evenodd" fill="#e8e8e8" stroke="#e8e8e8" stroke-width="0.5" stroke-linejoin="round" d="M5.72 3.21 L5.65 0.95 L8.35 0.95 L8.28 3.21 L9.65 4.00 L11.56 2.80 L12.92 5.15 L10.92 6.21 L10.92 7.79 L12.92 8.85 L11.56 11.20 L9.65 10.00 L8.28 10.79 L8.35 13.05 L5.65 13.05 L5.72 10.79 L4.35 10.00 L2.44 11.20 L1.08 8.85 L3.08 7.79 L3.08 6.21 L1.08 5.15 L2.44 2.80 L4.35 4.00 Z M8.90 7.00 A1.90 1.90 0 1 0 5.10 7.00 A1.90 1.90 0 1 0 8.90 7.00 Z"/></svg>
 <svg style="left:805px;top:161px" width="12" height="17" viewBox="0 0 12 17"><path d="M4 8.4 V5 C4 3 5 2.2 6.2 2.2 C7.4 2.2 8.4 3 8.4 5 V8.4" fill="none" stroke="#e4e4e4" stroke-width="1.2"/><rect x="2" y="8.2" width="8.3" height="6.9" rx="0.6" fill="#b6b6b6"/></svg>
 <!-- layer list -->
 <div style="left:561px;top:183px;width:264px;height:198px;background:#1f1f1f"></div>
 <div style="left:562.3px;top:187.6px;width:262.7px;height:36.2px;background:#313131"></div>
 <div style="left:562.3px;top:187.6px;width:14.6px;height:36.2px;background:#4c4c4c"></div>
 <div style="left:577.8px;top:187.6px;width:36.4px;height:36.2px;background:#2b2b2b"></div>
 <svg style="left:565px;top:192.6px" width="8.4" height="11" viewBox="0 0 8.4 11" fill="none" stroke="#c0c0c0" stroke-width="0.9"><rect x="0.5" y="0.5" width="7.4" height="10"/><circle cx="4.2" cy="3.8" r="1.1" fill="#c0c0c0" stroke="none"/><path d="M2.2 8.4 V6.4 H6.2 V8.4 Z" fill="#c0c0c0" stroke="none"/></svg>
 <svg style="left:565.4px;top:212.6px" width="8" height="6" viewBox="0 0 8 6" fill="none" stroke="#f4f4f4" stroke-width="1.7" stroke-linecap="round" stroke-linejoin="round"><path d="M0.9 0.9L4 4.6L7.1 0.9"/></svg>
 <svg style="left:579px;top:189px" width="34" height="34" viewBox="0 0 34 34">
  <defs><radialGradient id="tf" cx="0.5" cy="0.5" r="0.5"><stop offset="0.55" stop-color="#fff"/><stop offset="0.78" stop-color="#fff" stop-opacity="0.6"/><stop offset="1" stop-color="#fff" stop-opacity="0"/></radialGradient><mask id="tm"><rect width="34" height="34" fill="url(#tf)"/></mask></defs>
  <g mask="url(#tm)"><rect width="34" height="34" fill="#ee8438"/><circle cx="26" cy="10" r="7" fill="#e8582c"/><circle cx="5" cy="22" r="6" fill="#f2a030"/>
  <path d="M17.5 4 C12 4 10.4 10 9.6 17 L8 34 H30 L27 16 C26 8 23 4 17.5 4 Z" fill="#3e2a24"/>
  <path d="M3 22 L12 24 L17 29 L23 24 L29 27 L31 34 H3 Z" fill="#e4122c"/>
  <ellipse cx="17.4" cy="14" rx="5.6" ry="6.6" transform="rotate(14 17.4 14)" fill="#f3c6a8"/>
  <path d="M11.6 12 C12 7 15 5.6 18 5.8 C21 6 23 8.6 23.4 13 L21.4 11.4 L13.8 9.6 Z" fill="#3e2a24"/>
  <path d="M3 15 L4.6 10 L6.2 14 L8 11 L8.4 15.4 L10 16.8 L7 18.6 L4 24 L2 22 Z" fill="#f3c6a8"/></g>
 </svg>
 <div class="t" style="left:625.4px;top:201px;font-size:11.5px;color:#fafafa;letter-spacing:-0.25px">22862503_m.jpg</div>
 <div style="left:791.8px;top:187.6px;width:1.6px;height:36.2px;background:#1e1e1e"></div>
 <svg style="left:802.6px;top:202px" width="10" height="7" viewBox="0 0 13 9"><path d="M0.3 4.5 C2.2 1.2 4.4 0.3 6.5 0.3 C8.6 0.3 10.8 1.2 12.7 4.5 C10.8 7.8 8.6 8.7 6.5 8.7 C4.4 8.7 2.2 7.8 0.3 4.5 Z" fill="#f4f4f4"/><circle cx="6.5" cy="4.5" r="2.3" fill="#303030"/></svg>
 <!-- row 2 -->
 <div style="left:562.3px;top:224.8px;width:7.2px;height:36.2px;background:#4c4c4c"></div>
 <div style="left:569.5px;top:224.8px;width:255.5px;height:36.2px;background:#0b5fcc"></div>
 <div style="left:586.4px;top:224.8px;width:37.4px;height:36.2px;background:#000"></div>
 <svg style="left:573.6px;top:238px" width="10" height="10" viewBox="0 0 10 10" fill="none" stroke="#b39a72" stroke-width="1"><rect x="0.6" y="0.6" width="5.8" height="5.8" rx="1"/><circle cx="5.6" cy="5.6" r="3.4"/></svg>
 <svg style="left:586.4px;top:224.8px" width="38" height="36" viewBox="0 0 38 36"><defs><radialGradient id="wc" cx="18.6" cy="18.2" r="17" gradientUnits="userSpaceOnUse"><stop offset="0.66" stop-color="#fff"/><stop offset="0.78" stop-color="#fff" stop-opacity="0.7"/><stop offset="0.88" stop-color="#fff" stop-opacity="0.22"/><stop offset="0.97" stop-color="#fff" stop-opacity="0"/></radialGradient></defs><circle cx="18.6" cy="18.2" r="17" fill="url(#wc)"/><rect x="26.2" y="25.6" width="9.6" height="9.6" fill="#dcdcdc" stroke="#fff" stroke-width="0.8" stroke-dasharray="1 0.8"/><circle cx="31" cy="30.4" r="3.4" fill="#8c8c8c"/></svg>
 <div class="t" style="left:634.4px;top:239px;font-size:9.2px;color:#6a9ee6;letter-spacing:-0.1px">クリッピングマスク</div>
 <svg style="left:757.4px;top:234.6px" width="16" height="16" viewBox="0 0 16 16"><text x="1" y="13.6" font-family="Liberation Sans,sans-serif" font-weight="700" font-size="14.6" fill="#a8a090" textLength="13" lengthAdjust="spacingAndGlyphs">FX</text></svg>
 <div style="left:791.8px;top:224.8px;width:1.6px;height:36.2px;background:#0c2f66"></div>
 <svg style="left:802.6px;top:239.8px" width="10" height="7" viewBox="0 0 13 9"><path d="M0.3 4.5 C2.2 1.2 4.4 0.3 6.5 0.3 C8.6 0.3 10.8 1.2 12.7 4.5 C10.8 7.8 8.6 8.7 6.5 8.7 C4.4 8.7 2.2 7.8 0.3 4.5 Z" fill="#f4f4f4"/><circle cx="6.5" cy="4.5" r="2.3" fill="#0b5fcc"/></svg>
 <div style="left:561px;top:184.8px;width:258.4px;height:80px;border:1.5px solid #c9305f;border-radius:1.5px"></div>
</div>
<div id="rp2" style="left:0;top:0;width:825px;height:585px">
 <!-- layer toolbar -->
 <svg style="left:561px;top:381px" width="264" height="33" viewBox="561 381 264 33">
  <g fill="none" stroke="#b4b4b4" stroke-width="1.1"><path d="M577.6 390.8 H569.4 Q568.4 390.8 568.4 391.8 V404.6 Q568.4 405.6 569.4 405.6 H581 Q582 405.6 582 404.6 V396.4"/><path d="M574.4 399.8 L575 396.8 L582 389.6 Q583 388.8 583.8 389.6 L584.2 390 Q585 390.8 584.2 391.8 L577.2 399 Z"/></g>
  <rect x="621.4" y="390.4" width="15.4" height="15" rx="1" fill="#f0f0f0"/>
  <text x="629.1" y="402.7" text-anchor="middle" font-family="Liberation Sans,sans-serif" font-weight="700" font-size="13.6" fill="#262626" textLength="12.6" lengthAdjust="spacingAndGlyphs">FX</text>
  <rect x="642.8" y="390.4" width="16" height="15" rx="1" fill="#f0f0f0"/><circle cx="650.8" cy="397.9" r="4.8" fill="#2e2e2e"/>
  <path d="M666.4 390.4 H679.8 V392 L674.8 397.9 L679.8 403.8 V405.4 H666.4 V403.8 L671.4 397.9 L666.4 392 Z" fill="#f0f0f0"/>
  <circle cx="695" cy="398" r="7" fill="none" stroke="#f0f0f0" stroke-width="1.3"/><path d="M699.95 393.05 A7 7 0 0 1 690.05 402.95 Z" fill="#f0f0f0"/>
  <rect x="735.4" y="390.6" width="15.6" height="15" rx="1" fill="none" stroke="#e8e8e8" stroke-width="1.2"/><circle cx="741.5" cy="396.2" r="3.5" fill="#e4e4e4"/><rect x="741.4" y="397" width="6.4" height="5.6" fill="#e4e4e4"/>
  <path d="M757.1 405.6 V392.6 Q757.1 391.6 758.1 391.6 H766.6 Q767.6 391.6 767.6 392.6 V394.4 H771.8 Q772.8 394.4 772.8 395.4 V405.6 Z" fill="none" stroke="#e0e0e0" stroke-width="1.2" stroke-linejoin="round"/>
  <g fill="#f0f0f0"><rect x="778.90" y="390.40" width="3.05" height="3.05"/><rect x="778.90" y="396.50" width="3.05" height="3.05"/><rect x="778.90" y="402.60" width="3.05" height="3.05"/><rect x="781.95" y="393.45" width="3.05" height="3.05"/><rect x="781.95" y="399.55" width="3.05" height="3.05"/><rect x="785.00" y="390.40" width="3.05" height="3.05"/><rect x="785.00" y="396.50" width="3.05" height="3.05"/><rect x="785.00" y="402.60" width="3.05" height="3.05"/><rect x="788.05" y="393.45" width="3.05" height="3.05"/><rect x="788.05" y="399.55" width="3.05" height="3.05"/><rect x="791.10" y="390.40" width="3.05" height="3.05"/><rect x="791.10" y="396.50" width="3.05" height="3.05"/><rect x="791.10" y="402.60" width="3.05" height="3.05"/></g>
  <g fill="none" stroke="#e0e0e0" stroke-width="1.1"><path d="M802.4 392.6 H815.6 M806.4 392.4 V390.4 H811.6 V392.4 M803.8 392.8 L804.6 405.4 H813.4 L814.2 392.8 M807.2 395.4 V402.8 M810.8 395.4 V402.8"/></g>
 </svg>
 <div style="left:561px;top:414.2px;width:264px;height:2.3px;background:#121212"></div>
 <div style="left:561px;top:416.5px;width:264px;height:27.2px;background:#272727"></div>
 <div style="left:568.8px;top:421.4px;width:4px;height:17px;border-radius:2px;background:#4c4c4c"></div>
 <div style="left:578.8px;top:420px;width:33.6px;height:18.6px;border-radius:4.5px;background:#474747"></div>
 <div class="t tb" style="left:585px;top:424px">変形</div>
 <div class="t tn" style="left:618.6px;top:424px;font-size:10px">ナビゲータ</div>
 <div class="t tn" style="left:681px;top:424px;font-size:10px">履歴</div>
 <div style="left:800.4px;top:422.2px;width:15.5px;height:15.0px;border:1px solid #e0e0e0;border-radius:3.5px"></div><svg style="left:803.2px;top:426.6px" width="10" height="7" viewBox="0 0 10 7" fill="none" stroke="#f0f0f0" stroke-width="1.4" stroke-linecap="round" stroke-linejoin="round"><path d="M1 1L5 5.6L9 1"/></svg>
 <svg style="left:574px;top:465px" width="46" height="46" viewBox="574 465 46 46"><rect x="581.8" y="471.8" width="32" height="32.6" fill="#767676"/><rect x="579.6" y="486.0" width="4.4" height="4.4" fill="#a2a2a2"/><rect x="579.6" y="502.2" width="4.4" height="4.4" fill="#a2a2a2"/><rect x="595.5" y="469.6" width="4.4" height="4.4" fill="#a2a2a2"/><rect x="595.5" y="486.0" width="4.4" height="4.4" fill="#a2a2a2"/><rect x="595.5" y="502.2" width="4.4" height="4.4" fill="#a2a2a2"/><rect x="611.6" y="469.6" width="4.4" height="4.4" fill="#a2a2a2"/><rect x="611.6" y="486.0" width="4.4" height="4.4" fill="#a2a2a2"/><rect x="611.6" y="502.2" width="4.4" height="4.4" fill="#a2a2a2"/><rect x="576.4" y="467.2" width="9.6" height="9.8" fill="#fff"/></svg>
 <div class="t fl" style="left:630.0px;top:462.2px;width:20px;text-align:right">X:</div><div style="left:654.8px;top:458.8px;width:58.2px;height:16.6px;background:#1e1e1e;border-radius:1.5px"></div><div class="t fv" style="left:657.4px;top:462.4px"><span style="letter-spacing:0px">87.9 mm</span></div><div class="t fl" style="left:717.6px;top:462.2px;width:20px;text-align:right">W:</div><div style="left:742.6px;top:458.8px;width:58.4px;height:16.6px;background:#1e1e1e;border-radius:1.5px"></div><div class="t fv" style="left:745.2px;top:462.4px"><span style="letter-spacing:0.1px">128.3 mm</span></div>
 <div class="t fl" style="left:630.0px;top:484.0px;width:20px;text-align:right">Y:</div><div style="left:654.8px;top:480.4px;width:58.2px;height:16.8px;background:#1e1e1e;border-radius:1.5px"></div><div class="t fv" style="left:657.4px;top:484.0px"><span style="letter-spacing:-0.15px">21 mm</span></div><div class="t fl" style="left:717.6px;top:483.0px;width:20px;text-align:right">H:</div><div style="left:742.6px;top:480.4px;width:58.4px;height:16.8px;background:#1e1e1e;border-radius:1.5px"></div><div class="t fv" style="left:745.2px;top:484.0px"><span style="letter-spacing:0.1px">128.3 mm</span></div>
 <div class="t fl" style="left:630.0px;top:510.0px;width:20px;text-align:right">R:</div><div style="left:654.8px;top:506.4px;width:45.2px;height:17.0px;background:#1e1e1e;border-radius:1.5px"></div><div class="t fv" style="left:657.4px;top:510.0px">0 °</div><div class="t fl" style="left:717.6px;top:510.0px;width:20px;text-align:right">S:</div><div style="left:742.6px;top:506.4px;width:45.4px;height:17.0px;background:#1e1e1e;border-radius:1.5px"></div><div class="t fv" style="left:745.2px;top:510.0px">0 °</div>
 <div style="left:701.4px;top:506.4px;width:11.6px;height:17px;background:#1e1e1e;border-radius:1.5px"></div><svg style="left:704.6px;top:513.3px" width="5.4" height="4" viewBox="0 0 7 5" fill="none" stroke="#f0f0f0" stroke-width="2.0" stroke-linecap="round" stroke-linejoin="round"><path d="M0.8 0.8L3.5 3.8L6.2 0.8"/></svg>
 <div style="left:789.4px;top:506.4px;width:11.6px;height:17px;background:#1e1e1e;border-radius:1.5px"></div><svg style="left:792.6px;top:513.3px" width="5.4" height="4" viewBox="0 0 7 5" fill="none" stroke="#f0f0f0" stroke-width="2.0" stroke-linecap="round" stroke-linejoin="round"><path d="M0.8 0.8L3.5 3.8L6.2 0.8"/></svg>
 <svg style="left:806px;top:468px" width="12" height="20" viewBox="0 0 12 20" fill="none" stroke="#a8a8a8" stroke-width="1"><path d="M3.4 7.4 V2 Q3.4 0.9 4.5 0.9 H7.5 Q8.6 0.9 8.6 2 V7.4 M3.4 12.4 V17.8 Q3.4 18.9 4.5 18.9 H7.5 Q8.6 18.9 8.6 17.8 V12.4"/><path d="M0.8 9.8 H3 M5 9.8 H7 M9 9.8 H11.2" stroke="#8a8a8a"/></svg>
 <svg style="left:769px;top:533px" width="15" height="15" viewBox="0 0 15 15"><path d="M0.8 5 V1.6 Q0.8 0.8 1.6 0.8 H4.4 M7 0.8 H10.4 M12.6 0.8 H13.2 Q14 0.8 14 1.6 V4 M14 7 V10 M14 12.6 V13.2 Q14 14 13.2 14 H11.4" fill="none" stroke="#e0e0e0" stroke-width="1.2"/><rect x="0.4" y="7" width="8.6" height="7.6" rx="1.6" fill="#e8e8e8"/></svg>
 <svg style="left:794.2px;top:538.6px" width="5.4" height="4" viewBox="0 0 7 5" fill="none" stroke="#b4b4b4" stroke-width="2.0" stroke-linecap="round" stroke-linejoin="round"><path d="M0.8 0.8L3.5 3.8L6.2 0.8"/></svg>
</div>
<!-- STATUS -->
<div class="hl" style="left:0;top:564px;width:825px"></div>
<div id="status">
  <svg style="left:0;top:0" width="560" height="20" viewBox="0 565 560 20">
   <g fill="#5c5c5c"><rect x="11.6" y="569" width="1.3" height="10.4"/><path d="M22 569 V579.4 L13.8 574.2 Z"/><path d="M39 569 V579.4 L30.8 574.2 Z"/></g>
   <g fill="#d6d6d6"><path d="M147 569 V579.4 L155.6 574.2 Z"/></g>
   <g fill="#5c5c5c"><path d="M163.6 569.6 V578.8 L170.4 574.2 Z"/><rect x="171.4" y="569.2" width="1.3" height="10"/></g>
   <g fill="none" stroke="#5a5a5a" stroke-width="1"><path d="M184 577.6 V568 H193.4 V577.6 Z M186 570.6 H191.4 M186 572.8 H191.4 M186 575 H191.4 M186 579.6 H195.4 V570"/><path d="M203.6 576 A3.4 3 0 1 1 210 576 M202.4 573.6 L203.6 576.4 L206 575" stroke="#4c4c4c"/></g>
   <g fill="none" stroke="#e2e2e2" stroke-width="1.1"><rect x="222" y="568" width="8.4" height="10.4" rx="1"/><path d="M224.6 580.6 H232 Q233 580.6 233 579.6 V570.4"/></g>
   <g fill="none" stroke="#a8a8a8" stroke-width="1"><path d="M242.4 568 H251.4 V578.6 H242.4 Z M244.4 570.6 H249.4 M244.4 572.8 H249.4 M244.4 575 H249.4 M244.4 580.6 H253.6 V570"/></g>
  </svg>
  <div style="left:44px;top:1px;width:100px;height:18px;border-radius:4px;background:#1f1f1f"></div>
  <div class="t" style="left:44px;top:3.4px;width:100px;text-align:center;font-size:11.5px;color:#f2f2f2">1 / 1</div>
  <div class="t" style="left:280px;top:5px;font-size:10.4px;color:#c8c8c8;letter-spacing:0px">'円'が選択されています。<b style="color:#f6f6f6;position:static"> ドラッグ</b>で選択範囲を移動します。</div>
  <div class="t" style="left:566.6px;top:4.6px;font-size:10.5px;font-weight:700;color:#f2f2f2;letter-spacing:-0.3px">テスト用 (48.7%)</div>
  <svg style="left:810px;top:5.4px" width="9" height="9" viewBox="0 0 9 9" stroke="#8e8e8e" stroke-width="1.7" stroke-linecap="round"><path d="M4.5 0.9 V8.1 M1.1 2.8 L7.9 6.2 M7.9 2.8 L1.1 6.2"/></svg>
</div>
<div class="vl" style="left:559px;top:565px;height:20px;width:2px"></div>
</div>
</body>
</html>
